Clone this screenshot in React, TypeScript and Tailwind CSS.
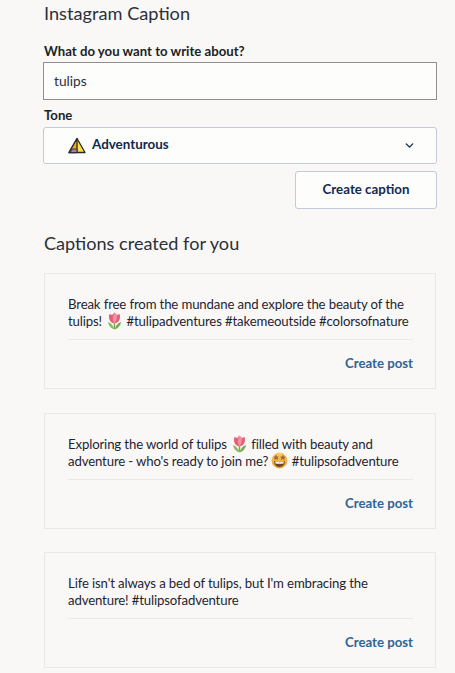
import React from "react";
import { ChevronDown } from "lucide-react";

const Tulip = () => (
  <svg viewBox="0 0 16 19" className="inline-block w-[15px] h-[18px] align-[1px] mx-[1.5px] my-[-5px]">
    <path d="M8 18 L8 10" stroke="#7fa85a" strokeWidth="1.6" />
    <path d="M8 18.5 C4.5 17.5 1.5 14.5 1 10.5 C4.5 11.5 7 14.5 8 18.5 Z" fill="#8dbb62" />
    <path d="M8 18.5 C11.5 17.5 14.5 14.5 15 10.5 C11.5 11.5 9 14.5 8 18.5 Z" fill="#79a94f" />
    <path d="M2.5 2 L5.5 3 L8 0.5 L10.5 3 L13.5 2 C14.5 6.5 13.5 11.5 8 12 C2.5 11.5 1.5 6.5 2.5 2 Z" fill="#e4607a" />
    <path d="M8 0.5 L10.5 3 C11 6 10 10 8 12 C6 10 5.5 6 8 0.5 Z" fill="#f291a2" />
  </svg>
);

const StarFace = () => (
  <svg viewBox="0 0 20 20" className="inline-block w-[17px] h-[17px] align-[2px] my-[-5px]">
    <defs>
      <linearGradient id="face" x1="0" y1="0" x2="0" y2="1">
        <stop offset="0" stopColor="#f7cf62" />
        <stop offset="1" stopColor="#e39a35" />
      </linearGradient>
    </defs>
    <circle cx="10" cy="10" r="9.3" fill="url(#face)" />
    <path d="M3.5 10.5 C7 12 13 12 16.5 10.5 C16 15.5 13 17.5 10 17.5 C7 17.5 4 15.5 3.5 10.5 Z" fill="#6e4420" />
    <path d="M5 11.3 C8 12.2 12 12.2 15 11.3 L14.7 13.4 C12 14 8 14 5.3 13.4 Z" fill="#fff" />
    <path d="M6 2.8 L7 5.3 L9.5 5.5 L7.6 7.1 L8.3 9.4 L6 8.1 L3.7 9.4 L4.4 7.1 L2.5 5.5 L5 5.3 Z" fill="#a8622a" />
    <path d="M14 2.8 L15 5.3 L17.5 5.5 L15.6 7.1 L16.3 9.4 L14 8.1 L11.7 9.4 L12.4 7.1 L10.5 5.5 L13 5.3 Z" fill="#a8622a" />
  </svg>
);

const Warning = () => (
  <svg viewBox="0 0 18 16" className="w-[18px] h-[17px] shrink-0 mt-[-1px]">
    <path d="M9 1 L17 15 L1 15 Z" fill="#fde23f" stroke="#2a2a2a" strokeWidth="1.3" strokeLinejoin="round" />
    <path d="M9 1 L9 15 L1 15 Z" fill="#eaa92c" stroke="#2a2a2a" strokeWidth="1.3" strokeLinejoin="round" />
    <path d="M4 11.5 L9 11.5 L9 15 L2.5 15 Z" fill="#a77ab8" stroke="#2a2a2a" strokeWidth="0.8" />
  </svg>
);

const Caption = ({ children }: { children: React.ReactNode }) => (
  <div className="border border-[#e9e8e6] pl-[23px] pr-[22px] pt-[22px] h-[116px]">
    <p className="text-[13.2px] tracking-[-0.14px] leading-[17px] text-[#1f2430] pb-[9px] border-b border-[#e9e8e6] whitespace-nowrap">
      {children}
    </p>
    <div className="flex justify-end mt-[15px]">
      <span className="text-[13.2px] font-bold leading-[17px] text-[#2f6496]">Create post</span>
    </div>
  </div>
);

export default function App() {
  return (
    <div className="w-[455px] h-[673px] overflow-hidden bg-[#f9f8f7] pl-[43px] pr-[18px] font-['Lato',sans-serif]">
      <h1 className="text-[18.2px] leading-[24px] pt-[1px] pl-[1px] text-[#2c3038]">Instagram Caption</h1>

      <div className="mt-[18px] text-[13.2px] font-bold leading-[16px] pl-[1px] text-[#1c1f26]">What do you want to write about?</div>
      <div className="mt-[3px] h-[38px] border border-[#8f8f8f] bg-[#fdfdfc] flex items-center pl-[10px] text-[13.7px] text-[#2c3038]">
        tulips
      </div>

      <div className="mt-[7px] text-[13.2px] font-bold leading-[16px] pl-[1px] text-[#1c1f26]">Tone</div>
      <div className="mt-[4px] h-[37px] border border-[#c3cbd8] rounded-[3px] bg-[#fdfdfc] flex items-center pl-[24px] pr-[20px]">
        <Warning />
        <span className="ml-[6px] pb-[2px] text-[13.4px] font-bold text-[#12294f]">Adventurous</span>
        <ChevronDown size={13} strokeWidth={2.5} className="ml-auto text-[#12294f]" />
      </div>

      <div className="flex justify-end mt-[7px]">
        <button className="w-[142px] h-[38px] border border-[#c3cbd8] rounded-[3px] bg-[#fdfdfc] text-[13.3px] font-bold text-[#12294f]">
          Create caption
        </button>
      </div>

      <h2 className="mt-[22px] pl-[1px] text-[18.1px] leading-[24px] text-[#2c3038]">Captions created for you</h2>

      <div className="mt-[18px] mx-[1px] flex flex-col gap-[23.5px]">
        <Caption>
          Break free from the mundane and explore the beauty of the
          <br />
          tulips! <Tulip /> #tulipadventures #takemeoutside #colorsofnature
        </Caption>
        <Caption>
          Exploring the world of tulips <Tulip /> filled with beauty and
          <br />
          adventure - who's ready to join me? <StarFace /> #tulipsofadventure
        </Caption>
        <Caption>
          Life isn't always a bed of tulips, but I'm embracing the
          <br />
          adventure! #tulipsofadventure
        </Caption>
      </div>
    </div>
  );
}
